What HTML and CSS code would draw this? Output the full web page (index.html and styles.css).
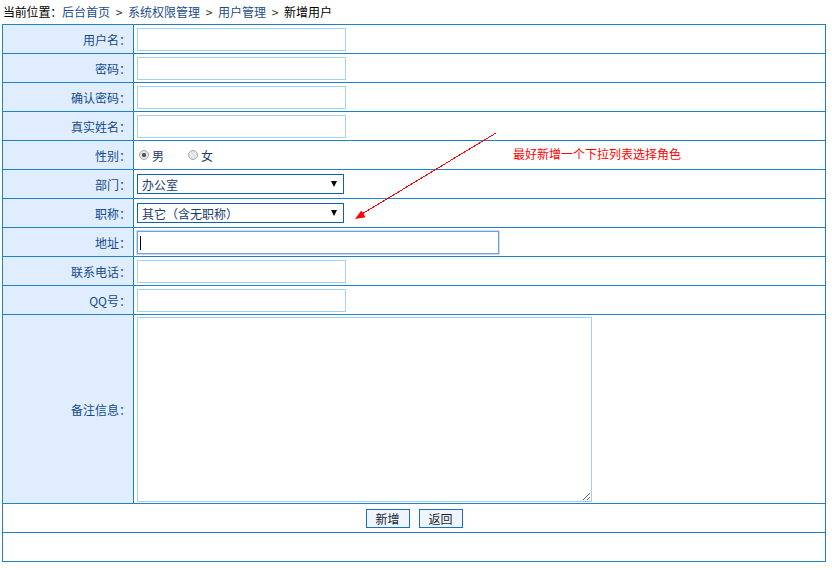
FILE: index.html
```html
<!DOCTYPE html>
<html lang="zh-CN">
<head>
<meta charset="utf-8">
<title>新增用户</title>
<link rel="stylesheet" href="styles.css">
</head>
<body>
<div class="crumb">
  <span class="crumb-label">当前位置：</span><a class="crumb-link">后台首页</a><span class="sep">&gt;</span><a class="crumb-link">系统权限管理</a><span class="sep">&gt;</span><a class="crumb-link">用户管理</a><span class="sep">&gt;</span><span class="crumb-cur">新增用户</span>
</div>
<table class="form">
  <tr><td class="lbl">用户名：</td><td class="fld"><input class="txt" type="text"></td></tr>
  <tr><td class="lbl">密码：</td><td class="fld"><input class="txt" type="password"></td></tr>
  <tr><td class="lbl">确认密码：</td><td class="fld"><input class="txt" type="password"></td></tr>
  <tr><td class="lbl">真实姓名：</td><td class="fld"><input class="txt" type="text"></td></tr>
  <tr><td class="lbl">性别：</td><td class="fld">
    <div class="radios">
      <label class="opt"><input class="radio" type="radio" name="sex" checked><span>男</span></label>
      <label class="opt"><input class="radio" type="radio" name="sex"><span>女</span></label>
    </div>
  </td></tr>
  <tr><td class="lbl">部门：</td><td class="fld"><div class="sel-wrap"><select class="sel"><option>办公室</option></select></div></td></tr>
  <tr><td class="lbl">职称：</td><td class="fld"><div class="sel-wrap"><select class="sel"><option>其它（含无职称）</option></select></div></td></tr>
  <tr><td class="lbl">地址：</td><td class="fld"><input class="txt txt-wide" type="text"></td></tr>
  <tr><td class="lbl">联系电话：</td><td class="fld"><input class="txt" type="text"></td></tr>
  <tr><td class="lbl">QQ号：</td><td class="fld"><input class="txt" type="text"></td></tr>
  <tr class="tall"><td class="lbl">备注信息：</td><td class="fld"><textarea class="area"></textarea></td></tr>
  <tr><td class="actions" colspan="2"><div class="btns"><button class="btn" type="button">新增</button><button class="btn" type="button">返回</button></div></td></tr>
  <tr><td class="empty" colspan="2"></td></tr>
</table>

<div class="note">最好新增一个下拉列表选择角色</div>
<svg class="arrow" width="832" height="570" viewBox="0 0 832 570">
  <line x1="496" y1="133" x2="362" y2="214" stroke="#ff0000" stroke-width="1" shape-rendering="crispEdges"/>
  <polygon points="355,219 365.6,217.2 361.4,210.4" fill="#ff0000"/>
</svg>
</body>
</html>
```

FILE: styles.css
```css
html, body {
  margin: 0;
  padding: 0;
  background: #fff;
}
body {
  padding: 0 2px;
  font-family: "Noto Sans CJK SC", "DejaVu Sans", sans-serif;
  font-size: 12px;
  color: #000;
  position: relative;
  width: 828px;
  height: 570px;
  box-sizing: border-box;
}

/* breadcrumb */
.crumb {
  height: 24px;
  line-height: 23px;
  padding-left: 1px;
  white-space: nowrap;
}
.crumb-label { color: #000; letter-spacing: -0.2px; }
.crumb-link { color: #1b4d8c; text-decoration: none; }
.crumb-cur { color: #000; }
.sep {
  display: inline-block;
  width: 18px;
  text-align: center;
  color: #333;
}

/* form table */
.form {
  border-collapse: collapse;
  width: 824px;
  table-layout: fixed;
}
.form td {
  border: 1px solid #1f82c8;
  height: 28px;
  padding: 0;
  vertical-align: middle;
}
.form .tall td { height: 188px; }
.lbl {
  width: 128px;
  background: #e0edfe;
  color: #134b8a;
  text-align: right;
  padding-right: 2px !important;
  white-space: nowrap;
}
.fld {
  padding-left: 3px !important;
  color: #1b3c6e;
}

.txt {
  display: block;
  box-sizing: border-box;
  width: 209px;
  height: 23px;
  margin: 0;
  border: 1px solid #a3d2ec;
  background: #fff;
  padding: 0 3px;
  font: 12px "Noto Sans CJK SC", sans-serif;
  outline: none;
}
.txt-wide {
  width: 362px;
  border-color: #6f9fe2;
  box-shadow: 0 0 0 1px #c9ddf6;
  background: linear-gradient(#000, #000) no-repeat 2px 4px / 1px 14px, #fff;
}

/* radios */
.radios {
  display: flex;
  align-items: center;
  gap: 24px;
  padding-left: 2px;
}
.opt {
  display: flex;
  align-items: center;
  gap: 3px;
}
.radio {
  appearance: none;
  -webkit-appearance: none;
  box-sizing: border-box;
  width: 10px;
  height: 10px;
  margin: 0;
  border: 1px solid #a9a9a9;
  border-radius: 50%;
  background: #e6e6e6;
}
.radio:checked {
  background: radial-gradient(circle, #555 0 1.8px, #e6e6e6 2.4px);
}

/* selects */
.sel-wrap {
  position: relative;
  width: 207px;
  height: 20px;
}
.sel {
  appearance: none;
  -webkit-appearance: none;
  display: block;
  box-sizing: border-box;
  width: 207px;
  height: 20px;
  margin: 0;
  border: 1px solid #1560a8;
  border-radius: 0;
  background: #fff;
  padding: 0 0 0 4px;
  font: 12px "Noto Sans CJK SC", sans-serif;
  color: #1b3c6e;
  outline: none;
}
.sel-wrap::after {
  content: "";
  position: absolute;
  right: 7px;
  top: 7px;
  border-left: 3.5px solid transparent;
  border-right: 3.5px solid transparent;
  border-top: 6px solid #000;
  pointer-events: none;
}

/* textarea */
.area {
  display: block;
  box-sizing: border-box;
  width: 455px;
  height: 185px;
  margin: 0;
  border: 1px solid #a3d2ec;
  padding: 2px;
  font: 12px "Noto Sans CJK SC", sans-serif;
  outline: none;
}

/* buttons */
.btns {
  display: flex;
  justify-content: center;
  gap: 9px;
}
.btn {
  box-sizing: border-box;
  width: 44px;
  height: 19px;
  margin: 0;
  padding: 0;
  border: 1px solid #1b6fbf;
  background: #eef5fd;
  color: #1a2533;
  font: 12px "Noto Sans CJK SC", sans-serif;
  line-height: 17px;
}

/* annotation overlay */
.note {
  position: absolute;
  left: 513px;
  top: 146px;
  color: #ff0000;
  font-size: 12px;
  line-height: 16px;
  white-space: nowrap;
}
.arrow {
  position: absolute;
  left: 0;
  top: 0;
  pointer-events: none;
}
```
